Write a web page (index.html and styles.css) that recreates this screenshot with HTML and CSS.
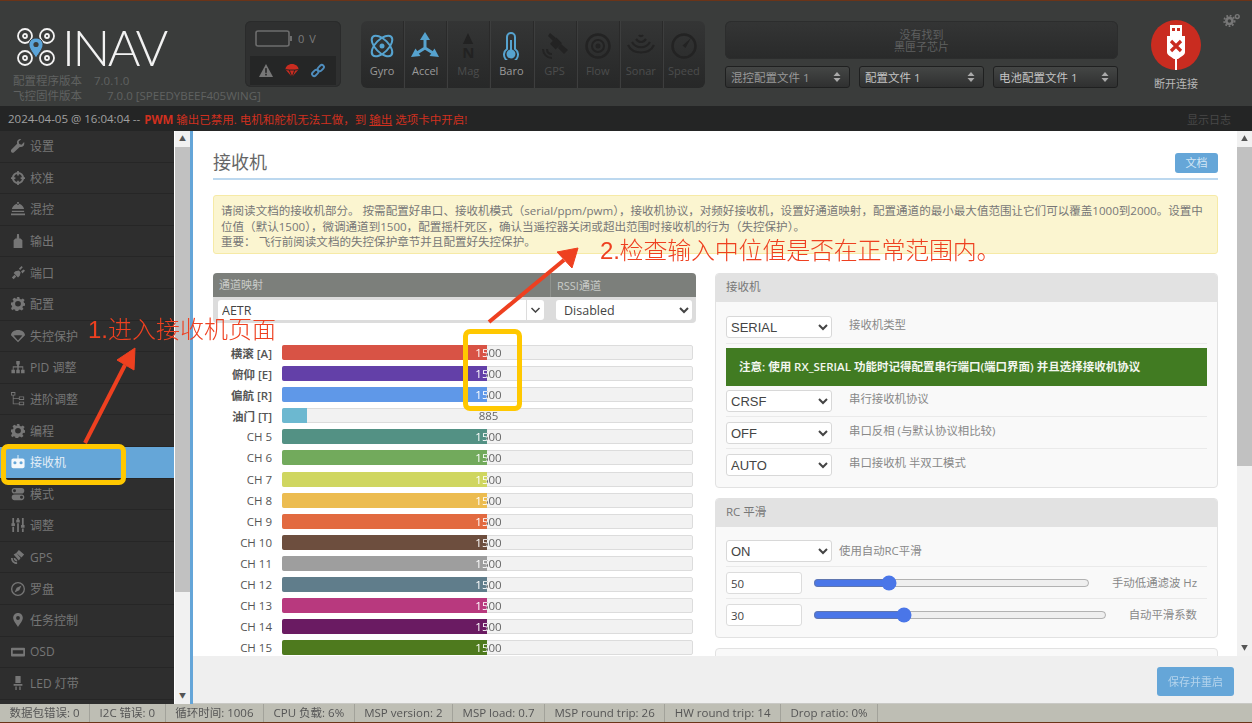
FILE: index.html
```html
<!DOCTYPE html>
<html lang="zh-CN">
<head>
    <meta charset="UTF-8">
    <meta name="viewport" content="width=device-width, initial-scale=1.0">
    <title>INAV Configurator - 接收机</title>
    <link rel="stylesheet" href="styles.css">
</head>
<body>
<div class="app">
    <header class="header">
        <div class="brand">
            <div class="logo">
                <svg class="logo-mark" viewBox="0 0 40 40" width="40" height="40">
                    <g fill="none" stroke="#f2f2f2" stroke-width="1.8">
                        <circle cx="9" cy="9" r="7"/><circle cx="31" cy="9" r="7"/>
                        <circle cx="9" cy="31" r="7"/><circle cx="31" cy="31" r="7"/>
                        <circle cx="9" cy="9" r="2"/><circle cx="31" cy="9" r="2"/>
                        <circle cx="9" cy="31" r="2"/><circle cx="31" cy="31" r="2"/>
                    </g>
                    <path d="M20 11c-4.400 0-7 3.200-7 6.800 0 4.200 4.600 9.200 7 13.200 2.400-4 7-9 7-13.200 0-3.600-2.600-6.800-7-6.800z" fill="#5ba4d9" stroke="#3a3c3b"/>
                    <circle cx="20" cy="17.500" r="2.600" fill="#3a3c3b"/>
                </svg>
                <span class="logo-text">INAV</span>
            </div>
            <div class="version">配置程序版本<span class="version-num">7.0.1.0</span></div>
            <div class="version">飞控固件版本<span class="version-num wide">7.0.0 [SPEEDYBEEF405WING]</span></div>
        </div>

        <div class="battery-panel">
            <div class="battery-top">
                <svg viewBox="0 0 37 17" width="37" height="17">
                    <rect x="1" y="1" width="33" height="15" rx="2" fill="none" stroke="#6d6d6d" stroke-width="1.600"/>
                    <rect x="35" y="6" width="2" height="5" fill="#6d6d6d"/>
                </svg>
                <span class="battery-volt">0 V</span>
            </div>
            <div class="battery-icons">
                <svg viewBox="0 0 16 16" width="16" height="15"><path d="M8 1l7.500 14H.5z" fill="#777"/><rect x="7.200" y="5.500" width="1.600" height="5" fill="#222"/><rect x="7.200" y="11.500" width="1.600" height="1.800" fill="#222"/></svg>
                <svg viewBox="0 0 16 16" width="16" height="15"><path d="M1 7c0-3.500 3.200-6 7-6s7 2.500 7 6l-7 8z" fill="#c92c20"/><path d="M1 7l4 .5L8 15M15 7l-4 .5L8 15M5 7.500h6" fill="none" stroke="#222" stroke-width="1"/></svg>
                <svg viewBox="0 0 16 16" width="16" height="15"><g fill="none" stroke="#4f8dbd" stroke-width="2"><rect x="1.500" y="8.500" width="7.500" height="4.500" rx="2.200" transform="rotate(-45 5 11)"/><rect x="7" y="3" width="7.500" height="4.500" rx="2.200" transform="rotate(-45 11 5)"/></g></svg>
            </div>
        </div>

        <div class="sensor-panel">
            <div class="sensor on">
                <svg viewBox="0 0 28 28" width="28" height="28"><g fill="none" stroke="#56a3cf" stroke-width="2"><ellipse cx="14" cy="14" rx="13" ry="6.500" transform="rotate(45 14 14)"/><ellipse cx="14" cy="14" rx="13" ry="6.500" transform="rotate(-45 14 14)"/></g><circle cx="14" cy="14" r="2.500" fill="#56a3cf"/></svg>
                <span>Gyro</span>
            </div>
            <div class="sensor on">
                <svg viewBox="0 0 28 28" width="28" height="28"><g fill="#56a3cf"><path d="M14 0l5 8H9z"/><path d="M0 25l4.500-8.500 5 7.500z"/><path d="M28 25l-4.500-8.500-5 7.500z"/></g><path d="M14 7v9M14 16l-8 5M14 16l8 5" fill="none" stroke="#56a3cf" stroke-width="3"/></svg>
                <span>Accel</span>
            </div>
            <div class="sensor">
                <svg viewBox="0 0 28 28" width="28" height="13"><path d="M14 2l11 24H3z" fill="#222"/></svg>
                <b class="mag-n">N</b>
                <span>Mag</span>
            </div>
            <div class="sensor on">
                <svg viewBox="0 0 28 28" width="28" height="28"><path d="M10 17V5a4 4 0 018 0v12a7 7 0 11-8 0z" fill="none" stroke="#56a3cf" stroke-width="2"/><circle cx="14" cy="22" r="4.500" fill="#56a3cf"/><rect x="13" y="8" width="2" height="12" fill="#56a3cf"/></svg>
                <span>Baro</span>
            </div>
            <div class="sensor">
                <svg viewBox="0 0 28 28" width="28" height="28"><g fill="#232323"><path d="M9 1l6 5-3 3-5-5z"/><path d="M20 12l7 6-4 4-6-6z"/><rect x="11" y="7" width="8" height="9" transform="rotate(45 15 11.500)"/></g><path d="M2 17c0 5 4 9 9 9M6 17c0 3 2 5 5 5" fill="none" stroke="#232323" stroke-width="2"/></svg>
                <span>GPS</span>
            </div>
            <div class="sensor">
                <svg viewBox="0 0 28 28" width="28" height="28"><g fill="none" stroke="#232323"><circle cx="14" cy="14" r="11.500" stroke-width="2.500"/><circle cx="14" cy="14" r="6" stroke-width="2"/></g><circle cx="14" cy="14" r="2.500" fill="#232323"/></svg>
                <span>Flow</span>
            </div>
            <div class="sensor">
                <svg viewBox="0 0 28 28" width="28" height="28"><g fill="none" stroke="#232323" stroke-width="2.200"><path d="M1 13c5 10 21 10 26 0"/><path d="M5 10c4 7 14 7 18 0"/><path d="M9 7c3 4 7 4 10 0"/><path d="M12 3c1 1.500 3 1.500 4 0"/></g></svg>
                <span>Sonar</span>
            </div>
            <div class="sensor">
                <svg viewBox="0 0 28 28" width="28" height="28"><circle cx="14" cy="14" r="11.500" fill="none" stroke="#232323" stroke-width="2.500"/><path d="M21 6l-5.500 10-3-2.500z" fill="#232323"/></svg>
                <span>Speed</span>
            </div>
        </div>

        <div class="blackbox">
            <div class="chip-note">没有找到<br>黑匣子芯片</div>
            <div class="profiles">
                <div class="profile dim">混控配置文件 1<svg viewBox="0 0 8 12" width="8" height="12"><path d="M4 1l3.500 4h-7zM4 11L.5 7h7z" fill="#aaa"/></svg></div>
                <div class="profile">配置文件 1<svg viewBox="0 0 8 12" width="8" height="12"><path d="M4 1l3.500 4h-7zM4 11L.5 7h7z" fill="#aaa"/></svg></div>
                <div class="profile">电池配置文件 1<svg viewBox="0 0 8 12" width="8" height="12"><path d="M4 1l3.500 4h-7zM4 11L.5 7h7z" fill="#aaa"/></svg></div>
            </div>
        </div>

        <div class="connect">
            <div class="connect-btn">
                <svg viewBox="0 0 50 50" width="50" height="50">
                    <rect x="19" y="5" width="12" height="11" fill="#fff"/>
                    <rect x="21" y="8" width="3" height="3" fill="#c92c20"/><rect x="26" y="8" width="3" height="3" fill="#c92c20"/>
                    <path d="M16 16h18v16c0 3-3 4-7 7H23c-4-3-7-4-7-7z" fill="#fff"/>
                    <rect x="24" y="38" width="2" height="12" fill="#fff"/>
                    <path d="M20 21l10 10M30 21L20 31" stroke="#c92c20" stroke-width="3.200"/>
                </svg>
            </div>
            <span class="connect-label">断开连接</span>
        </div>

        <svg class="settings-gear" viewBox="0 0 20 16" width="18" height="14">
            <g fill="#777"><circle cx="7" cy="9" r="5"/><circle cx="16" cy="4" r="3"/></g>
            <g fill="none" stroke="#777" stroke-width="2" stroke-dasharray="2 2"><circle cx="7" cy="9" r="6"/></g>
            <circle cx="7" cy="9" r="2" fill="#3a3c3b"/><circle cx="16" cy="4" r="1.300" fill="#3a3c3b"/>
        </svg>
    </header>

    <div class="log-bar">
        <span class="log-time">2024-04-05 @ 16:04:04 --</span>
        <span class="log-warn"><b>PWM</b> 输出已禁用. 电机和舵机无法工做，到 <u>输出</u> 选项卡中开启!</span>
        <span class="log-toggle">显示日志</span>
    </div>

    <div class="middle">
        <nav class="nav">
            <a class="nav-item"><svg viewBox="0 0 16 16"><path d="M15 3.500l-3 3-2.500-.8L8.700 3l3-3C8.500-.5 6 2 7 5.300L.5 12c-1 1-1 2 0 3s2 1 3 0L10 9c3.300 1 6-1.500 5-5.500z"/></svg>设置</a>
            <a class="nav-item"><svg viewBox="0 0 16 16"><path d="M8 1a7 7 0 100 14A7 7 0 008 1zm0 2.500a4.500 4.500 0 110 9 4.500 4.500 0 010-9z"/><path d="M7 0h2v5H7zM7 11h2v5H7zM0 7h5v2H0zM11 7h5v2h-5z"/></svg>校准</a>
            <a class="nav-item"><svg viewBox="0 0 16 16"><path d="M8 2C4 2 2 5 1 8h14c-1-3-3-6-7-6zM1 10h14v1.500H1zM0 13h16v2H0zM7 0h2v3H7z"/></svg>混控</a>
            <a class="nav-item"><svg viewBox="0 0 16 16"><path d="M7 0h2l.5 5h-3zM5 5h6l2 2v9H3V7z"/></svg>输出</a>
            <a class="nav-item"><svg viewBox="0 0 16 16"><path d="M3 8l5 5 2-2 1-4-2-2-4 1zM9 3l3-3 1.500 1.500-3 3zM11.500 6l3-2 1.500 1.500-3 3zM4 10l-3 3 2 2 3-3z"/></svg>端口</a>
            <a class="nav-item"><svg viewBox="0 0 16 16"><path d="M6.500 0h3l.4 2.300 1.600.7 2-1.300 2.100 2.100-1.300 2 .7 1.600L16 7.800v3l-2.300.4-.7 1.500 1.300 2-2.100 2-2-1.200-1.600.6-.4 1.900h-3l-.4-2.300-1.600-.6-2 1.300L.1 13.700l1.300-2-.7-1.500L0 9.800v-3l2.300-.4.7-1.600-1.300-2 2.100-2 2 1.200 1.600-.6zM8 5a3.300 3.300 0 100 6.600A3.300 3.300 0 008 5z" transform="scale(1 .93)"/></svg>配置</a>
            <a class="nav-item"><svg viewBox="0 0 16 16"><path d="M0 7c0-3.500 3.600-6 8-6s8 2.500 8 6l-8 8zM3 7.500L8 13l5-5.500-2.500-.5H5.500z" fill-rule="evenodd"/></svg>失控保护</a>
            <a class="nav-item"><svg viewBox="0 0 16 16"><path d="M6 1h4v4H9v2h5v4h1.500v4h-4v-4H13V8.500H8.800V11h1.200v4H6v-4h1.200V8.500H3V11h1.500v4h-4v-4H2V7h5V5H6z"/></svg>PID 调整</a>
            <a class="nav-item"><svg viewBox="0 0 16 16"><path d="M0 0h5v4H3v3h6V5h6v4h-6V8H3v5h6v-2h6v4H9v-1H2V4H0zm1 1v2h3V1zm9 5v2h4V6zm0 6v2h4v-2z" fill-rule="evenodd"/></svg>进阶调整</a>
            <a class="nav-item"><svg viewBox="0 0 16 16"><path d="M6.500 0h3l.4 2.300 1.600.7 2-1.300 2.100 2.100-1.300 2 .7 1.600L16 7.800v3l-2.300.4-.7 1.500 1.300 2-2.100 2-2-1.200-1.600.6-.4 1.900h-3l-.4-2.300-1.600-.6-2 1.300L.1 13.700l1.300-2-.7-1.500L0 9.800v-3l2.300-.4.7-1.600-1.300-2 2.100-2 2 1.200 1.600-.6zM8 5a3.300 3.300 0 100 6.600A3.300 3.300 0 008 5z" transform="scale(1 .93)"/></svg>编程</a>
            <a class="nav-item active"><svg viewBox="0 0 16 16"><path d="M7.500 0h1v4h5c1 0 2 1 2 2v7c0 1-1 2-2 2h-11c-1 0-2-1-2-2V6c0-1 1-2 2-2h5zM4.500 7a1.800 1.800 0 100 3.600 1.800 1.800 0 000-3.600zm7 0a1.800 1.800 0 100 3.600 1.800 1.800 0 000-3.600z" fill-rule="evenodd"/></svg>接收机</a>
            <a class="nav-item"><svg viewBox="0 0 16 16"><path d="M4 1h8a3.200 3.200 0 010 6.400H4A3.200 3.200 0 014 1zm0 1.500a1.700 1.700 0 100 3.400 1.700 1.700 0 000-3.400zM4 8.600h8a3.200 3.200 0 010 6.400H4a3.200 3.200 0 010-6.400zm8 1.500a1.700 1.700 0 100 3.400 1.700 1.700 0 000-3.400z" fill-rule="evenodd"/></svg>模式</a>
            <a class="nav-item"><svg viewBox="0 0 16 16"><path d="M1.500 0h2v6h1v3h-4V6h1zM1.500 10h2v6h-2zM7 0h2v2h1v3H6V2h1zM7 6h2v10H7zM12.500 0h2v8h1v3h-4V8h1zM12.500 12h2v4h-2z"/></svg>调整</a>
            <a class="nav-item"><svg viewBox="0 0 16 16"><path d="M9 0l6 5-3 3.500-6-5zM3 5l3-1.500L11 9l-2 3zM0 9c0 4 3 7 7 7v-2c-3 0-5-2-5-5zM3 9c0 2.500 2 4 4 4v-2c-1 0-2-1-2-2z"/></svg>GPS</a>
            <a class="nav-item"><svg viewBox="0 0 16 16"><path d="M8 0a8 8 0 100 16A8 8 0 008 0zm0 1.500a6.500 6.500 0 110 13 6.500 6.500 0 010-13z"/><path d="M12 4L9.500 9.500 4 12l2.500-5.500z"/></svg>罗盘</a>
            <a class="nav-item"><svg viewBox="0 0 16 16"><path d="M8 0C4.600 0 2.500 2.600 2.500 5.500 2.500 9.500 6.500 13 8 16c1.500-3 5.500-6.500 5.500-10.500C13.500 2.600 11.400 0 8 0zm0 3.500a2.200 2.200 0 110 4.400 2.200 2.200 0 010-4.400z" fill-rule="evenodd"/></svg>任务控制</a>
            <a class="nav-item"><svg viewBox="0 0 16 16"><path d="M1 3h14c.6 0 1 .4 1 1v8c0 .6-.4 1-1 1H1c-.6 0-1-.4-1-1V4c0-.6.4-1 1-1zm1 3v4h12V6z" fill-rule="evenodd"/></svg>OSD</a>
            <a class="nav-item"><svg viewBox="0 0 16 16"><path d="M5 1a3 3 0 016 0v7H5zM3 9h10v2H3zM5 12h1.500v4H5zM9.500 12H11v4H9.500z"/></svg>LED 灯带</a>
        </nav>
        <div class="scrollbar nav-scroll">
            <div class="scroll-arrow">▲</div>
            <div class="scroll-thumb nav-thumb"></div>
            <div class="scroll-track"></div>
            <div class="scroll-arrow">▼</div>
        </div>

        <main class="main">
            <div class="page">
                <div class="scroll-body">
                    <div class="title-row">
                        <h1>接收机</h1>
                        <a class="btn-doc">文档</a>
                    </div>
                    <div class="note">
                        请阅读文档的接收机部分。 按需配置好串口、接收机模式（serial/ppm/pwm），接收机协议，对频好接收机，设置好通道映射，配置通道的最小最大值范围让它们可以覆盖1000到2000。设置中<br>
                        位值（默认1500），微调通道到1500，配置摇杆死区，确认当遥控器关闭或超出范围时接收机的行为（失控保护）。<br>
                        重要： 飞行前阅读文档的失控保护章节并且配置好失控保护。
                    </div>
                    <div class="columns">
                        <section class="left-col">
                            <div class="map-head">
                                <span class="map-title">通道映射</span>
                                <span class="rssi-title">RSSI通道</span>
                            </div>
                            <div class="map-row">
                                <div class="map-combo">
                                    <input class="map-input" type="text" value="AETR">
                                    <svg viewBox="0 0 10 6" width="10" height="6"><path d="M1 1l4 4 4-4" fill="none" stroke="#444" stroke-width="1.500"/></svg>
                                </div>
                                <select class="rssi-select"><option>Disabled</option></select>
                            </div>
                            <div class="bars">
                                <div class="bar-row strong"><label>横滚 [A]</label><div class="bar"><span class="bar-val">1500</span><div class="bar-fill" style="width:50%;background:#d85345"><span class="bar-val-in">1500</span></div></div></div>
                                <div class="bar-row strong"><label>俯仰 [E]</label><div class="bar"><span class="bar-val">1500</span><div class="bar-fill" style="width:50%;background:#6340a8"><span class="bar-val-in">1500</span></div></div></div>
                                <div class="bar-row strong"><label>偏航 [R]</label><div class="bar"><span class="bar-val">1500</span><div class="bar-fill" style="width:50%;background:#5f98e8"><span class="bar-val-in">1500</span></div></div></div>
                                <div class="bar-row strong"><label>油门 [T]</label><div class="bar"><span class="bar-val">885</span><div class="bar-fill" style="width:6.200%;background:#6cb8d0"><span class="bar-val-in">885</span></div></div></div>
                                <div class="bar-row"><label>CH 5</label><div class="bar"><span class="bar-val">1500</span><div class="bar-fill" style="width:50%;background:#539184"><span class="bar-val-in">1500</span></div></div></div>
                                <div class="bar-row"><label>CH 6</label><div class="bar"><span class="bar-val">1500</span><div class="bar-fill" style="width:50%;background:#72aa5c"><span class="bar-val-in">1500</span></div></div></div>
                                <div class="bar-row"><label>CH 7</label><div class="bar"><span class="bar-val">1500</span><div class="bar-fill" style="width:50%;background:#cfd660"><span class="bar-val-in">1500</span></div></div></div>
                                <div class="bar-row"><label>CH 8</label><div class="bar"><span class="bar-val">1500</span><div class="bar-fill" style="width:50%;background:#ecbc50"><span class="bar-val-in">1500</span></div></div></div>
                                <div class="bar-row"><label>CH 9</label><div class="bar"><span class="bar-val">1500</span><div class="bar-fill" style="width:50%;background:#e26a40"><span class="bar-val-in">1500</span></div></div></div>
                                <div class="bar-row"><label>CH 10</label><div class="bar"><span class="bar-val">1500</span><div class="bar-fill" style="width:50%;background:#6d4e3e"><span class="bar-val-in">1500</span></div></div></div>
                                <div class="bar-row"><label>CH 11</label><div class="bar"><span class="bar-val">1500</span><div class="bar-fill" style="width:50%;background:#9e9e9e"><span class="bar-val-in">1500</span></div></div></div>
                                <div class="bar-row"><label>CH 12</label><div class="bar"><span class="bar-val">1500</span><div class="bar-fill" style="width:50%;background:#607d8b"><span class="bar-val-in">1500</span></div></div></div>
                                <div class="bar-row"><label>CH 13</label><div class="bar"><span class="bar-val">1500</span><div class="bar-fill" style="width:50%;background:#b8397e"><span class="bar-val-in">1500</span></div></div></div>
                                <div class="bar-row"><label>CH 14</label><div class="bar"><span class="bar-val">1500</span><div class="bar-fill" style="width:50%;background:#6a1b62"><span class="bar-val-in">1500</span></div></div></div>
                                <div class="bar-row"><label>CH 15</label><div class="bar"><span class="bar-val">1500</span><div class="bar-fill" style="width:50%;background:#4e7a1e"><span class="bar-val-in">1500</span></div></div></div>
                            </div>
                        </section>

                        <section class="right-col">
                            <div class="panel">
                                <div class="panel-head">接收机</div>
                                <div class="panel-body">
                                    <div class="opt-row first">
                                        <select><option>SERIAL</option></select>
                                        <span class="opt-label">接收机类型</span>
                                    </div>
                                    <div class="rx-notice">注意: 使用 RX_SERIAL 功能时记得配置串行端口(端口界面) 并且选择接收机协议</div>
                                    <div class="opt-row after-notice">
                                        <select><option>CRSF</option></select>
                                        <span class="opt-label">串行接收机协议</span>
                                    </div>
                                    <div class="opt-row">
                                        <select><option>OFF</option></select>
                                        <span class="opt-label">串口反相 (与默认协议相比较)</span>
                                    </div>
                                    <div class="opt-row last">
                                        <select><option>AUTO</option></select>
                                        <span class="opt-label">串口接收机 半双工模式</span>
                                    </div>
                                </div>
                            </div>
                            <div class="panel rc-panel">
                                <div class="panel-head">RC 平滑</div>
                                <div class="panel-body">
                                    <div class="opt-row first">
                                        <select><option>ON</option></select>
                                        <span class="opt-label near">使用自动RC平滑</span>
                                    </div>
                                    <div class="opt-row slider-row">
                                        <input class="num" type="text" value="50">
                                        <input class="range short" type="range" min="0" max="100" value="26">
                                        <span class="opt-label end">手动低通滤波 Hz</span>
                                    </div>
                                    <div class="opt-row slider-row last">
                                        <input class="num" type="text" value="30">
                                        <input class="range long" type="range" min="0" max="100" value="30">
                                        <span class="opt-label end">自动平滑系数</span>
                                    </div>
                                </div>
                            </div>
                            <div class="panel next-panel"></div>
                        </section>
                    </div>
                </div>
                <div class="scrollbar">
                    <div class="scroll-arrow">▲</div>
                    <div class="scroll-thumb page-thumb"></div>
                    <div class="scroll-track"></div>
                    <div class="scroll-arrow">▼</div>
                </div>
            </div>
            <div class="save-bar"><a class="btn-save">保存并重启</a></div>
        </main>
    </div>

    <footer class="status">
        <span>数据包错误: 0</span>
        <span>I2C 错误: 0</span>
        <span>循环时间: 1006</span>
        <span>CPU 负载: 6%</span>
        <span>MSP version: 2</span>
        <span>MSP load: 0.7</span>
        <span>MSP round trip: 26</span>
        <span>HW round trip: 14</span>
        <span>Drop ratio: 0%</span>
    </footer>
</div>

<!-- red notes drawn on top of the screenshot -->
<div class="mark mark-nav"></div>
<div class="mark mark-values"></div>
<svg class="arrows" viewBox="0 0 1252 723" width="1252" height="723">
    <g fill="#ee4020" stroke="#ee4020">
        <path d="M85 443L125 365" stroke-width="4" fill="none"/>
        <path d="M135 348L117 360 134 370z" stroke-width="1"/>
        <path d="M489 322L564 260" stroke-width="4" fill="none"/>
        <path d="M578 248L557 252 572 268z" stroke-width="1"/>
    </g>
</svg>
<div class="callout callout-1">1.进入接收机页面</div>
<div class="callout callout-2">2.检查输入中位值是否在正常范围内。</div>
</body>
</html>
```

FILE: styles.css
```css
* {
    box-sizing: border-box;
}
html, body {
    margin: 0;
    height: 100%;
    overflow: hidden;
}
body {
    width: 1252px;
    height: 723px;
    position: relative;
    font-family: "Open Sans", "Noto Sans CJK SC", sans-serif;
    font-size: 12px;
    color: #666;
    background: #fff;
}
.app {
    height: 723px;
    display: flex;
    flex-direction: column;
    filter: blur(.45px);
}

/* header */
.header {
    height: 106px;
    flex: none;
    display: flex;
    position: relative;
    padding-top: 20px;
    background: #3a3c3b;
    border-top: 1px solid #6b3418;
}
.brand {
    width: 245px;
    padding-left: 13px;
}
.logo {
    display: flex;
    align-items: center;
    height: 52px;
    padding-left: 3px;
}
.logo-mark {
    flex: none;
}
.logo-text {
    margin-left: 6px;
    font-family: "Lato", sans-serif;
    font-weight: 300;
    font-size: 50px;
    line-height: 50px;
    letter-spacing: -2.500px;
    color: #f2f2f2;
}
.version {
    font-size: 11.500px;
    line-height: 15px;
    color: #606261;
    white-space: nowrap;
}
.version-num {
    margin-left: 12px;
}
.version-num.wide {
    margin-left: 25px;
}
.battery-panel {
    width: 96px;
    height: 66px;
    flex: none;
    border-radius: 6px;
    overflow: hidden;
    background: #2f3030;
    box-shadow: inset 0 0 0 1px #2a2b2b;
}
.battery-top {
    height: 35px;
    display: flex;
    align-items: center;
    gap: 6px;
    padding-left: 10px;
}
.battery-volt {
    color: #7a7a7a;
    font-size: 11px;
    letter-spacing: 1px;
}
.battery-icons {
    height: 29px;
    margin: 0 5px;
    display: flex;
    align-items: center;
    justify-content: space-between;
    padding: 0 10px 0 8px;
    background: #252626;
}
.sensor-panel {
    width: 344px;
    height: 67px;
    flex: none;
    margin-left: 20px;
    display: flex;
    border-radius: 6px;
    overflow: hidden;
    background: linear-gradient(#343535, #272828);
}
.sensor {
    flex: 1;
    display: flex;
    flex-direction: column;
    align-items: center;
    padding-top: 11px;
    border-right: 1px solid #2a2a2a;
    box-shadow: 1px 0 0 #3d3e3e;
    color: #4c4d4d;
    font-size: 11px;
}
.sensor:last-child {
    border-right: 0;
    box-shadow: none;
}
.sensor span {
    margin-top: 3px;
    line-height: 15px;
}
.sensor.on {
    color: #9a9a9a;
}
.mag-n {
    color: #222;
    font-size: 15px;
    line-height: 15px;
}
.blackbox {
    width: 393px;
    flex: none;
    margin-left: 20px;
}
.chip-note {
    height: 38px;
    padding-top: 8px;
    text-align: center;
    font-size: 11px;
    line-height: 12px;
    color: #5f6060;
    border-radius: 6px;
    background: linear-gradient(#343535, #292a2a);
    box-shadow: inset 0 0 0 1px #2c2d2d;
}
.profiles {
    display: flex;
    justify-content: space-between;
    margin-top: 7px;
}
.profile {
    width: 125px;
    height: 22px;
    display: flex;
    align-items: center;
    justify-content: space-between;
    padding: 0 8px 0 5px;
    font-size: 11.500px;
    color: #c4c4c4;
    border-radius: 3px;
    border: 1px solid #1f2020;
    background: linear-gradient(#444645, #2f3030);
}
.profile.dim {
    color: #999;
}
.connect {
    width: 60px;
    margin-left: 28px;
    margin-top: -1px;
    display: flex;
    flex-direction: column;
    align-items: center;
}
.connect-btn {
    width: 50px;
    height: 50px;
    flex: none;
    border-radius: 50%;
    background: #c92c20;
}
.connect-label {
    margin-top: 5px;
    font-size: 11px;
    color: #b8b8b8;
    white-space: nowrap;
}
.settings-gear {
    position: absolute;
    top: 12px;
    right: 11px;
}

/* log line */
.log-bar {
    height: 25px;
    flex: none;
    display: flex;
    align-items: center;
    padding: 0 21px 0 8px;
    gap: 4px;
    background: #242525;
    white-space: nowrap;
}
.log-time {
    color: #a0a0a0;
    font-size: 11.500px;
}
.log-warn {
    color: #d0301f;
    font-size: 11.500px;
}
.log-toggle {
    margin-left: auto;
    color: #484848;
    font-size: 11px;
}

/* middle */
.middle {
    flex: 1;
    min-height: 0;
    display: flex;
    background: #fff;
}
.nav {
    width: 174px;
    flex: none;
    overflow: hidden;
    background: #2e2e2e;
}
.nav-item {
    height: 31.600px;
    display: flex;
    align-items: center;
    gap: 5px;
    padding-left: 11px;
    color: #767676;
    font-size: 12px;
    border-bottom: 1px solid #262626;
}
.nav-item svg {
    width: 14px;
    height: 14px;
    flex: none;
    fill: #767676;
}
.nav-item.active {
    background: #65a6d8;
    color: #e4eef6;
}
.nav-item.active svg {
    fill: #f4f8fb;
}
.scrollbar {
    width: 15px;
    flex: none;
    display: flex;
    flex-direction: column;
    background: #f1f1f1;
}
.nav-scroll {
    margin-left: 1px;
}
.scroll-arrow {
    height: 16px;
    flex: none;
    text-align: center;
    font-size: 7px;
    line-height: 16px;
    color: #555;
}
.scroll-thumb {
    background: #c1c1c1;
    flex: none;
}
.nav-thumb {
    height: 445px;
}
.page-thumb {
    height: 319px;
}
.scroll-track {
    flex: 1;
}

/* main */
.main {
    flex: 1;
    min-width: 0;
    display: flex;
    flex-direction: column;
    border-left: 3px solid #64a5d8;
}
.page {
    flex: 1;
    min-height: 0;
    display: flex;
}
.scroll-body {
    flex: 1;
    min-width: 0;
    overflow: hidden;
    padding: 0 19px 0 20px;
}
.title-row {
    height: 49px;
    display: flex;
    align-items: center;
    justify-content: space-between;
    padding-top: 12px;
    border-bottom: 2px solid #bcd8ef;
}
h1 {
    margin: 0;
    font-size: 18px;
    font-weight: 400;
    color: #666;
}
.btn-doc {
    width: 43px;
    height: 20px;
    margin-top: 4px;
    text-align: center;
    line-height: 20px;
    font-size: 11px;
    color: #d4e6f5;
    background: #65a6d8;
    border-radius: 3px;
}
.note {
    margin-top: 15px;
    height: 59px;
    padding: 7px 7px;
    font-size: 11.560px;
    line-height: 15.500px;
    color: #777;
    white-space: nowrap;
    background: #fbf5d0;
    border: 1px solid #f6eaa6;
    border-radius: 3px;
}
.columns {
    display: flex;
    gap: 19px;
    margin-top: 19px;
}
.left-col {
    width: 483px;
    flex: none;
}
.map-head {
    height: 24px;
    display: flex;
    align-items: center;
    background: #7c7f7b;
    border-radius: 4px 4px 0 0;
    color: #c9cbc8;
    font-size: 11px;
}
.map-title {
    width: 338px;
    padding-left: 6px;
    line-height: 24px;
    border-right: 1px solid #8f928e;
}
.rssi-title {
    padding-left: 6px;
}
.map-row {
    height: 26px;
    display: flex;
    align-items: center;
    padding-left: 5px;
    background: #dcdcdc;
    border-radius: 0 0 4px 4px;
}
.map-combo {
    width: 326px;
    height: 20px;
    display: flex;
    align-items: center;
    background: #fff;
    border-radius: 3px;
}
.map-input {
    flex: 1;
    min-width: 0;
    height: 20px;
    border: 0;
    border-right: 1px solid #dcdcdc;
    padding: 0 4px;
    background: none;
    font: 12.500px "Open Sans", sans-serif;
    color: #444;
}
.map-combo svg {
    width: 17px;
    flex: none;
}
select {
    width: 106px;
    height: 22px;
    flex: none;
    padding: 0;
    font: 13px "Liberation Sans", sans-serif;
    color: #444;
    background-color: #fff;
    border: 1px solid #d8d8d8;
    border-radius: 3px;
}
.rssi-select {
    width: 136px;
    height: 20px;
    margin-left: 12px;
    padding-left: 4px;
    border: 0;
    font: 12.500px "Open Sans", sans-serif;
}
.bars {
    margin-top: 22px;
}
.bar-row {
    display: flex;
    align-items: center;
    height: 15px;
    margin-bottom: 6.100px;
}
.bar-row label {
    width: 59px;
    flex: none;
    text-align: right;
    font-size: 11.500px;
    color: #555;
}
.bar-row.strong label {
    font-weight: 600;
}
.bar {
    width: 411px;
    height: 15px;
    margin-left: 10px;
    position: relative;
    background: #f2f2f2;
    border: 1px solid #dcdcdc;
    border-radius: 2px;
}
.bar-val {
    position: absolute;
    left: 0;
    width: 411px;
    text-align: center;
    font-size: 11.500px;
    line-height: 13px;
    color: #666;
}
.bar-fill {
    position: absolute;
    left: -1px;
    top: -1px;
    height: 15px;
    overflow: hidden;
    border-radius: 2px 0 0 2px;
}
.bar-val-in {
    display: block;
    width: 413px;
    text-align: center;
    font-size: 11.500px;
    line-height: 15px;
    color: #fff;
}
.right-col {
    width: 503px;
    flex: none;
}
.panel {
    background: #f9f9f9;
    border: 1px solid #e2e2e2;
    border-radius: 4px;
    overflow: hidden;
}
.panel-head {
    height: 28px;
    padding-left: 10px;
    line-height: 26px;
    font-size: 11.500px;
    color: #777;
    background: #e2e2e2;
}
.panel-body {
    padding: 0 10px;
}
.opt-row {
    display: flex;
    align-items: flex-start;
    gap: 17px;
    padding: 5px 0 4px;
    border-bottom: 1px solid #eaeaea;
}
.opt-row.first {
    padding-top: 14px;
    padding-bottom: 5px;
}
.opt-row.after-notice {
    padding-top: 4px;
}
.opt-row.last {
    border-bottom: 0;
    padding-bottom: 11px;
}
.opt-label {
    padding-top: 2px;
    font-size: 11.400px;
    line-height: 14px;
    color: #888;
}
.opt-label.near {
    margin-left: -10px;
    padding-top: 4px;
}
.opt-label.end {
    margin-left: auto;
    padding-top: 0;
    padding-right: 10px;
}
.rx-notice {
    height: 38px;
    margin-top: 4px;
    padding-left: 13px;
    line-height: 38px;
    font-size: 11.500px;
    font-weight: 600;
    color: #f2f6ee;
    background: #417b22;
    white-space: nowrap;
}
.slider-row {
    gap: 11px;
    align-items: center;
}
.num {
    width: 76px;
    height: 22px;
    flex: none;
    padding: 0 4px;
    font: 11.500px "Open Sans", sans-serif;
    color: #444;
    border: 1px solid #dcdcdc;
    border-radius: 3px;
    background: #fff;
}
.range {
    margin: 0;
    accent-color: #4a76e8;
}
.range.short {
    width: 277px;
}
.range.long {
    width: 294px;
}
.rc-panel {
    margin-top: 10px;
}
.rc-panel .opt-row.first {
    padding-top: 13px;
    padding-bottom: 4px;
}
.next-panel {
    height: 40px;
    margin-top: 10px;
}
.save-bar {
    height: 48px;
    flex: none;
    display: flex;
    align-items: center;
    justify-content: flex-end;
    padding: 3px 18px 0 0;
    background: #efefef;
    border-bottom: 1px solid #c9c9c5;
}
.btn-save {
    width: 77px;
    height: 29px;
    text-align: center;
    line-height: 29px;
    font-size: 11px;
    color: #b4d4ec;
    background: #65a6d8;
    border-radius: 3px;
}

/* footer */
.status {
    height: 19px;
    flex: none;
    display: flex;
    align-items: center;
    font-size: 11.500px;
    color: #555;
    background: #bebeb4;
    border-bottom: 1px solid #6b3418;
}
.status span {
    padding: 0 9.500px;
    line-height: 18px;
    border-right: 1px solid #a2a29a;
    white-space: nowrap;
}

/* annotations over the page */
.mark {
    position: absolute;
    border: 5px solid #ffc800;
    border-radius: 7px;
}
.mark-nav {
    left: 1px;
    top: 444px;
    width: 125px;
    height: 41px;
}
.mark-values {
    left: 463px;
    top: 329px;
    width: 59px;
    height: 82px;
}
.arrows {
    position: absolute;
    left: 0;
    top: 0;
    pointer-events: none;
}
.callout {
    position: absolute;
    font-family: "Liberation Sans", "Noto Sans CJK SC", sans-serif;
    font-size: 24px;
    font-weight: 300;
    line-height: 30px;
    color: #ee4020;
    white-space: nowrap;
}
.callout-1 {
    left: 88px;
    top: 315px;
}
.callout-2 {
    left: 600px;
    top: 236px;
    letter-spacing: -.2px;
}
```
